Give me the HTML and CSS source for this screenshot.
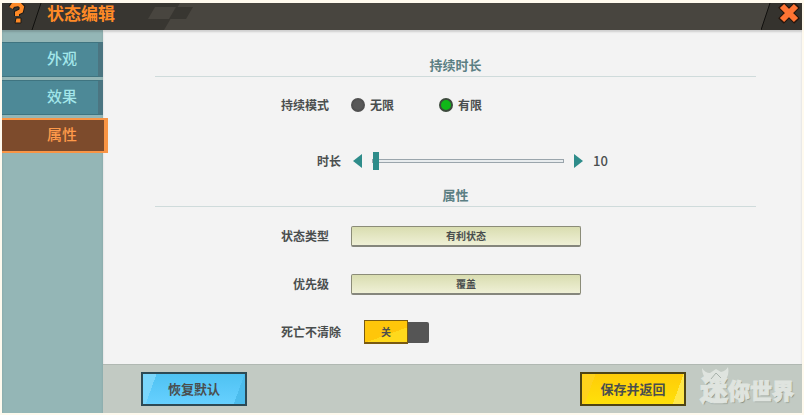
FILE: index.html
```html
<!DOCTYPE html>
<html lang="zh-CN">
<head>
    <meta charset="UTF-8">
    <meta name="viewport" content="width=device-width, initial-scale=1.0">
    <title>状态编辑</title>
    <link rel="stylesheet" href="styles.css">
</head>
<body>
    <div class="app">
        <header class="header">
            <button type="button" class="help" aria-label="帮助">
                <svg width="32" height="27" viewBox="0 0 32 27">
                    <path d="M9 5 L11 2 L17 1 L20 4 L19 8 L15 10 L15 13" fill="none" stroke="#1c1a17" stroke-width="6"/>
                    <path d="M14 15 H19 V20 H13 Z" fill="#ff8a26" stroke="#1c1a17" stroke-width="1"/>
                    <path d="M9 5 L11 2 L17 1 L20 4 L19 8 L15 10 L15 13" fill="none" stroke="#ff8a26" stroke-width="4"/>
                </svg>
            </button>
            <svg class="slash" width="12" height="27" viewBox="0 0 12 27">
                <path d="M2 27 L11 0" stroke="#11100e" stroke-width="1"/>
            </svg>
            <h1>状态编辑</h1>
            <svg class="checker" width="50" height="27" viewBox="0 0 50 27">
                <path d="M32 0 H50 V27 H16 Z" fill="#48453f"/>
                <path d="M7 4 H29 L22 16 H0 Z" fill="#48453f"/>
                <path d="M28 4 H45 L38 16 H21 Z" fill="#383631"/>
            </svg>
            <div class="bar">
                <button type="button" class="close" aria-label="关闭">
                    <svg width="41" height="27" viewBox="0 0 41 27">
                        <path d="M0 27 L9 0 H41 V27 Z" fill="#35332e"/>
                        <path d="M0 27 L9 0" stroke="#11100e" stroke-width="1"/>
                        <path d="M20 2 L36 18 M36 2 L20 18" stroke="#26150c" stroke-width="8"/>
                        <path d="M21 3 L35 17 M35 3 L21 17" stroke="#ff7433" stroke-width="6"/>
                    </svg>
                </button>
            </div>
        </header>

        <div class="body">
            <nav class="sidebar">
                <button type="button" class="tab">外观</button>
                <button type="button" class="tab">效果</button>
                <button type="button" class="tab active">属性</button>
            </nav>

            <main class="content">
                <form class="panel" id="stateForm">
                    <h2>持续时长</h2>
                    <div class="row mode-row">
                        <span class="label" id="modeLabel">持续模式</span>
                        <div class="radios" role="radiogroup" aria-labelledby="modeLabel">
                            <label><input type="radio" name="mode" value="infinite">无限</label>
                            <label><input type="radio" name="mode" value="limited" checked>有限</label>
                        </div>
                    </div>
                    <div class="row time-row">
                        <label class="label wide" for="duration">时长</label>
                        <div class="slider">
                            <button type="button" class="arrow" aria-label="减少">
                                <svg width="9" height="14" viewBox="0 0 9 14"><path d="M9 0 V14 L0 7 Z" fill="#2e8c8a"/></svg>
                            </button>
                            <input type="range" id="duration" min="10" max="600" value="10">
                            <button type="button" class="arrow" aria-label="增加">
                                <svg width="9" height="14" viewBox="0 0 9 14"><path d="M0 0 V14 L9 7 Z" fill="#2e8c8a"/></svg>
                            </button>
                            <output for="duration">10</output>
                        </div>
                    </div>

                    <h2>属性</h2>
                    <div class="row">
                        <label class="label" for="stateType">状态类型</label>
                        <select id="stateType">
                            <option>有利状态</option>
                        </select>
                    </div>
                    <div class="row">
                        <label class="label" for="priority">优先级</label>
                        <select id="priority">
                            <option>覆盖</option>
                        </select>
                    </div>
                    <div class="row">
                        <label class="label wide" for="keepOnDeath">死亡不清除</label>
                        <div class="switch">
                            <input type="checkbox" id="keepOnDeath">
                            <span class="knob">关</span>
                        </div>
                    </div>
                </form>

                <footer class="footer">
                    <button type="reset" form="stateForm" class="btn blue">恢复默认</button>
                    <button type="submit" form="stateForm" class="btn yellow">保存并返回</button>
                    <div class="logo">
                        <svg class="horns" width="30" height="16" viewBox="0 0 30 16">
                            <path d="M2 1 Q5 6 10 6 L16 2 L21 5 Q26 4 28 0 Q30 9 24 14 H8 Q2 9 2 1 Z" fill="#dfe4df"/>
                            <path d="M11 12 L16 6 L21 11" fill="none" stroke="#a9b3ac" stroke-width="1"/>
                        </svg>
                        <span class="big">迷</span><span>你世界</span>
                    </div>
                </footer>
            </main>
        </div>
    </div>
</body>
</html>
```
FILE: styles.css
```css
* {
    box-sizing: border-box;
}

body {
    margin: 0;
    padding: 3px 2px 2px;
    background: #fffaee;
    font-family: "Noto Sans CJK SC", sans-serif;
    font-size: 12px;
    font-weight: 700;
    line-height: 18px;
    color: #4a4e4e;
}

button,
select {
    margin: 0;
    padding: 0;
    border: none;
    background: none;
    font: inherit;
    color: inherit;
    cursor: pointer;
}

svg {
    display: block;
}

.app {
    display: flex;
    flex-direction: column;
    min-height: calc(100vh - 5px);
}

/* header */
.header {
    display: flex;
    height: 27px;
    background: #383631;
}

h1 {
    margin: 0 33px 0 5px;
    font-size: 17px;
    font-weight: 700;
    line-height: 20px;
    color: #ff8a26;
}

.slash {
    margin-left: -4px;
}

.bar {
    display: flex;
    flex: 1;
    justify-content: flex-end;
    background: #48453f;
}

/* sidebar */
.body {
    display: flex;
    flex: 1;
}

.sidebar {
    position: relative;
    display: flex;
    flex-direction: column;
    gap: 3px;
    width: 101px;
    padding-top: 12px;
    background: #94b6b6;
    box-shadow: inset 0 2px 2px #7f9b9b;
    z-index: 1;
}

.tab {
    height: 35px;
    padding: 0 0 3px 24px;
    border-top: 1px solid #3f7480;
    border-right: 5px solid #4b7581;
    border-bottom: 1px solid #3f7480;
    background: #4d8997;
    font-size: 15px;
    font-weight: 500;
    color: #a2e6ea;
    text-align: center;
}

.tab.active {
    width: 106px;
    padding-left: 18px;
    border: 2px solid #f99545;
    border-right-width: 4px;
    border-left: none;
    background: #7d4b2c;
    color: #ff9a4a;
}

/* form */
.content {
    display: flex;
    flex: 1;
    flex-direction: column;
    background: #f3f3f3;
    box-shadow: inset 0 2px 2px #cfcfcf;
}

.panel {
    flex: 1;
    padding: 24px 46px 0 52px;
}

h2 {
    margin: 0 0 5px;
    border-bottom: 1px solid #cfdbdb;
    font-size: 13px;
    font-weight: 700;
    line-height: 22px;
    color: #5b7f83;
    text-align: center;
}

.row {
    display: flex;
    align-items: center;
    height: 48px;
}

.mode-row {
    height: 46px;
}

.time-row {
    height: 56px;
    padding-top: 10px;
}

.label {
    width: 174px;
    text-align: right;
}

.wide {
    width: 186px;
}

.radios {
    display: flex;
    gap: 45px;
    margin-left: 22px;
}

.radios label {
    display: flex;
    align-items: center;
    gap: 5px;
}

.radios input {
    width: 14px;
    height: 14px;
    margin: 0;
    border: 2px solid #505050;
    border-radius: 50%;
    background: #585858;
    appearance: none;
}

.radios input:checked {
    border-color: #3c4a3c;
    background: #10b818;
}

.slider {
    display: flex;
    align-items: center;
    gap: 10px;
    margin-left: 12px;
}

.slider input {
    width: 192px;
    height: 18px;
    margin: 0;
    background: none;
    appearance: none;
}

.slider input::-webkit-slider-runnable-track {
    height: 4px;
    border: 1px solid #9aa5ac;
    background: #e8ecee;
}

.slider input::-webkit-slider-thumb {
    width: 6px;
    height: 18px;
    margin-top: -8px;
    background: #2e8c8a;
    appearance: none;
}

output {
    font-size: 13px;
    font-weight: 500;
}

select {
    width: 230px;
    height: 21px;
    margin-left: 22px;
    border: 1px solid #8b8c78;
    border-bottom: 2px solid #85867c;
    border-radius: 2px;
    background: linear-gradient(#d9ddb0, #eff0d6);
    font-size: 10px;
    text-align: center;
    text-align-last: center;
    appearance: none;
}

.switch {
    position: relative;
    display: flex;
    align-items: center;
    width: 65px;
    height: 24px;
    margin-left: 23px;
}

.switch input {
    width: 100%;
    height: 21px;
    margin: 0;
    border-radius: 2px;
    background: #555;
    appearance: none;
}

.knob {
    position: absolute;
    top: 0;
    left: 0;
    width: 44px;
    height: 24px;
    border: 1px solid #7a5a10;
    border-bottom-width: 2px;
    background: linear-gradient(160deg, #ffc60a 60%, #ffd91c 60%);
    font-size: 10px;
    line-height: 22px;
    text-align: center;
    pointer-events: none;
}

/* footer */
.footer {
    display: flex;
    align-items: center;
    height: 49px;
    padding: 0 8px 0 38px;
    border-top: 1px solid #b0b8b2;
    background: #c2cac3;
}

.btn {
    width: 106px;
    height: 34px;
    border: 2px solid #2d4a55;
    font-size: 13px;
}

.blue {
    background: linear-gradient(110deg, #7ad6fb 12%, transparent 12%, transparent 90%, #4cbcec 90%), linear-gradient(#4fc2f2, #66d0ff);
}

.yellow {
    margin-left: auto;
    border-color: #4f4415;
    background: linear-gradient(110deg, #ffd21c 12%, transparent 12%, transparent 90%, #ffe74a 90%), linear-gradient(#ffcc08, #ffe00a);
}

.logo {
    position: relative;
    display: flex;
    align-items: center;
    margin-left: 14px;
    font-size: 22px;
    font-weight: 900;
    line-height: 32px;
    color: #dfe4df;
    text-shadow: 1px 1px 1px #7f8982;
    -webkit-text-stroke: 1px #dfe4df;
}

.big {
    font-size: 28px;
}

.horns {
    position: absolute;
    top: -6px;
    left: 0;
}
```
